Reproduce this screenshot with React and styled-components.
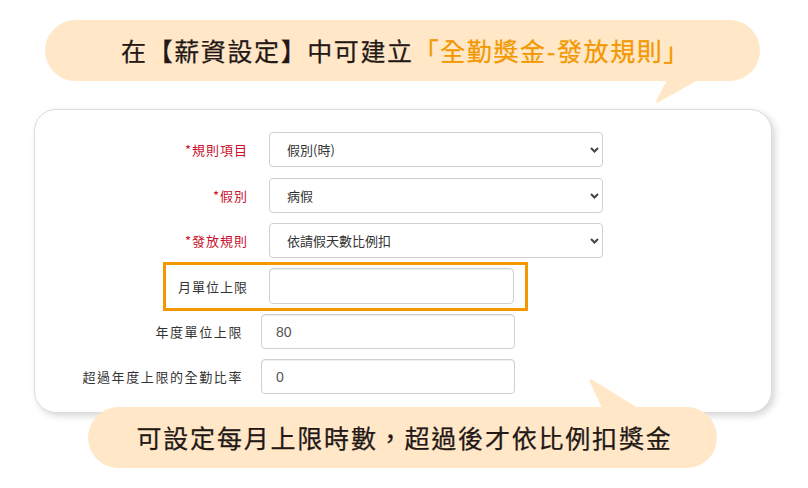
import React from 'react';
import styled, { createGlobalStyle } from 'styled-components';

const GlobalStyle = createGlobalStyle`
  html, body {
    margin: 0;
    padding: 0;
    background: #fff;
  }
  body {
    font-family: "Noto Sans CJK TC", "Noto Sans", sans-serif;
  }
`;

// form data
const selectRows = [
  { label: '規則項目', value: '假別(時)', mt: 0 },
  { label: '假別', value: '病假', mt: 11 },
  { label: '發放規則', value: '依請假天數比例扣', mt: 10 },
];

const numberRows = [
  { label: '年度單位上限', value: '80', mt: 3 },
  { label: '超過年度上限的全勤比率', value: '0', mt: 10 },
];

function Chevron() {
  return (
    <ChevronIcon width="9" height="6" viewBox="0 0 9 6">
      <path d="M1 1l3.5 3.5L8 1" fill="none" stroke="#444" strokeWidth="2" />
    </ChevronIcon>
  );
}

function App() {
  return (
    <Stage>
      <GlobalStyle />
      <TopBubble>
        <BubbleText $shift={6}>
          在【薪資設定】中可建立<Accent>「全勤獎金-發放規則」</Accent>
        </BubbleText>
      </TopBubble>

      <Card>
        {selectRows.map((row) => (
          <Row key={row.label} $mt={row.mt}>
            <Label $width={234} $pr={21} $required>
              *{row.label}
            </Label>
            <SelectWrap>
              <Select defaultValue={row.value}>
                <option>{row.value}</option>
              </Select>
              <Chevron />
            </SelectWrap>
          </Row>
        ))}

        <Highlight>
          <Label $width={103} $pr={21}>月單位上限</Label>
          <Input $width={245} $height={36} defaultValue="" />
        </Highlight>

        {numberRows.map((row) => (
          <Row key={row.label} $mt={row.mt}>
            <Label $width={226} $pr={18} $spacing={1.6}>{row.label}</Label>
            <Input $width={254} $height={35} defaultValue={row.value} />
          </Row>
        ))}
      </Card>

      <BottomBubble>
        <BubbleText $shift={4} $spacing={1.8}>可設定每月上限時數，超過後才依比例扣獎金</BubbleText>
      </BottomBubble>
    </Stage>
  );
}

// Custom CSS
const Stage = styled.div`
  width: 808px;
  height: 488px;
  padding-top: 20px;
  box-sizing: border-box;
  display: flex;
  flex-direction: column;
  overflow: hidden;
`;

const Bubble = styled.div`
  position: relative;
  height: 61px;
  border-radius: 31px;
  background: #ffe7c8;
  display: flex;
  align-items: center;
  justify-content: center;
  box-sizing: border-box;
  &::after {
    content: '';
    position: absolute;
    background: #ffe7c8;
  }
`;

const TopBubble = styled(Bubble)`
  margin-left: 45px;
  width: 715px;
  &::after {
    left: 611px;
    top: 60px;
    width: 42px;
    height: 23px;
    clip-path: polygon(11px 0, 42px 0, 1px 23px, 0 21px);
  }
`;

const BottomBubble = styled(Bubble)`
  margin-left: 88px;
  margin-top: -6px;
  width: 629px;
  z-index: 1;
  &::after {
    left: 501px;
    top: -28px;
    width: 49px;
    height: 29px;
    clip-path: polygon(0 1px, 2px 0, 49px 29px, 13px 29px);
  }
`;

const BubbleText = styled.div`
  font-size: 25px;
  font-weight: 400;
  -webkit-text-stroke: 0.25px currentColor;
  letter-spacing: ${(p) => p.$spacing || 1.6}px;
  color: #231815;
  line-height: 1;
  white-space: nowrap;
  margin-left: ${(p) => p.$shift}px;
`;

const Accent = styled.span`
  color: #f39800;
`;

const Card = styled.div`
  margin-top: 28px;
  margin-left: 34px;
  width: 738px;
  height: 304px;
  box-sizing: border-box;
  border: 1px solid #dcdcdc;
  border-radius: 22px;
  box-shadow: 3px 3px 7px rgba(0, 0, 0, 0.16);
  background: #fff;
  padding-top: 22px;
  display: flex;
  flex-direction: column;
`;

const Row = styled.div`
  display: flex;
  align-items: center;
  margin-top: ${(p) => p.$mt}px;
`;

const Label = styled.div`
  flex: 0 0 ${(p) => p.$width}px;
  box-sizing: border-box;
  padding-right: ${(p) => p.$pr}px;
  text-align: right;
  font-size: 13px;
  letter-spacing: ${(p) => p.$spacing || 1}px;
  color: ${(p) => (p.$required ? '#c8102e' : '#333')};
  white-space: nowrap;
`;

const SelectWrap = styled.div`
  position: relative;
  width: 334px;
  height: 35px;
`;

const Select = styled.select`
  appearance: none;
  width: 100%;
  height: 100%;
  box-sizing: border-box;
  border: 1px solid #cfcfcf;
  border-radius: 4px;
  background: #fff;
  padding: 0 0 0 17px;
  font-family: "Noto Sans CJK TC", sans-serif;
  font-size: 13px;
  color: #333;
  outline: none;
`;

const ChevronIcon = styled.svg`
  position: absolute;
  right: 4px;
  top: 15px;
  pointer-events: none;
`;

const Input = styled.input`
  width: ${(p) => p.$width}px;
  height: ${(p) => p.$height}px;
  box-sizing: border-box;
  border: 1px solid #d0d0d0;
  border-radius: 4px;
  box-shadow: inset 0 1px 1px rgba(0, 0, 0, 0.075);
  padding: 0 0 0 14px;
  font-family: "Liberation Sans", Arial, sans-serif;
  font-size: 14px;
  color: #555;
  outline: none;
`;

const Highlight = styled.div`
  display: flex;
  align-items: center;
  margin-top: 4px;
  margin-left: 128px;
  width: 365px;
  height: 49px;
  box-sizing: border-box;
  border: 3px solid #f39800;
  padding: 0 0 1px 0;
`;

export default App;
